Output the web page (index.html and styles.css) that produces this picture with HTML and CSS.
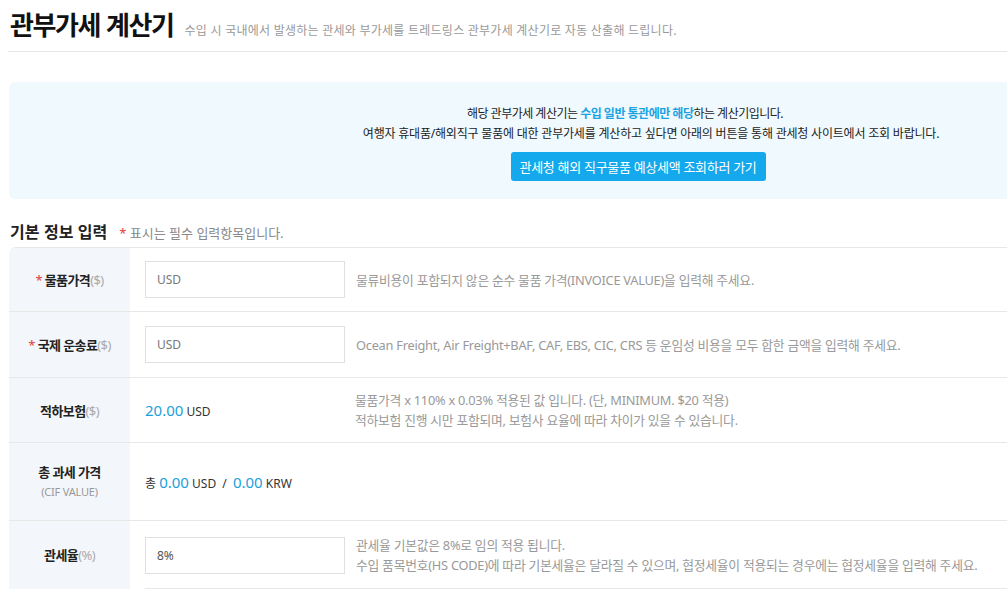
FILE: index.html
```html
<!DOCTYPE html>
<html lang="ko">
<head>
<meta charset="utf-8">
<title>관부가세 계산기</title>
<link rel="stylesheet" href="styles.css">
</head>
<body>
<div class="page">
  <header class="page-head">
    <h1 class="title">관부가세 계산기</h1>
    <p class="subtitle">수입 시 국내에서 발생하는 관세와 부가세를 트레드링스 관부가세 계산기로 자동 산출해 드립니다.</p>
  </header>

  <section class="notice">
    <p class="notice-line first">해당 관부가세 계산기는 <strong class="hl">수입 일반 통관에만 해당</strong>하는 계산기입니다.</p>
    <p class="notice-line second">여행자 휴대품/해외직구 물품에 대한 관부가세를 계산하고 싶다면 아래의 버튼을 통해 관세청 사이트에서 조회 바랍니다.</p>
    <button class="notice-btn" type="button">관세청 해외 직구물품 예상세액 조회하러 가기</button>
  </section>

  <div class="section-head">
    <h2 class="section-title">기본 정보 입력</h2>
    <span class="section-note"><span class="req">*</span> 표시는 필수 입력항목입니다.</span>
  </div>

  <div class="form-table">
    <div class="row r1">
      <div class="label"><span class="lbl"><span class="req">*</span> <b>물품가격</b><span class="unit">($)</span></span></div>
      <div class="cell">
        <input class="field" type="text" placeholder="USD">
        <p class="desc">물류비용이 포함되지 않은 순수 물품 가격(INVOICE VALUE)을 입력해 주세요.</p>
      </div>
    </div>
    <div class="row r2">
      <div class="label"><span class="lbl"><span class="req">*</span> <b>국제 운송료</b><span class="unit">($)</span></span></div>
      <div class="cell">
        <input class="field" type="text" placeholder="USD">
        <p class="desc">Ocean Freight, Air Freight+BAF, CAF, EBS, CIC, CRS 등 운임성 비용을 모두 합한 금액을 입력해 주세요.</p>
      </div>
    </div>
    <div class="row r3">
      <div class="label"><span class="lbl"><b>적하보험</b><span class="unit">($)</span></span></div>
      <div class="cell">
        <div class="value"><span class="num">20.00</span> USD</div>
        <p class="desc">물품가격 x 110% x 0.03% 적용된 값 입니다. (단, MINIMUM. $20 적용)<br>적하보험 진행 시만 포함되며, 보험사 요율에 따라 차이가 있을 수 있습니다.</p>
      </div>
    </div>
    <div class="row r4">
      <div class="label stack"><b>총 과세 가격</b><span class="sub">(CIF VALUE)</span></div>
      <div class="cell">
        <div class="value total">총 <span class="num">0.00</span> USD <span class="slash">/</span> <span class="num">0.00</span> KRW</div>
      </div>
    </div>
    <div class="row r5">
      <div class="label top"><span class="lbl"><b>관세율</b><span class="unit">(%)</span></span></div>
      <div class="cell col">
        <div class="sub-row">
          <input class="field" type="text" value="8%">
          <p class="desc">관세율 기본값은 8%로 임의 적용 됩니다.<br>수입 품목번호(HS CODE)에 따라 기본세율은 달라질 수 있으며, 협정세율이 적용되는 경우에는 협정세율을 입력해 주세요.</p>
        </div>
        <div class="sub-row next"></div>
      </div>
    </div>
  </div>
</div>
</body>
</html>
```

FILE: styles.css
```css
html, body {
  margin: 0;
  padding: 0;
  overflow: hidden;
  background: #fff;
}
body {
  font-family: "Noto Sans", "Noto Sans CJK KR", sans-serif;
  color: #333;
}
.page {
  width: 1258px;
  padding: 0 0 0 9px;
}
.page-head {
  display: flex;
  align-items: baseline;
  gap: 11px;
  height: 52px;
  box-sizing: border-box;
  padding-top: 5px;
  border-bottom: 1px solid #e6e6e6;
  margin-left: -1px;
  padding-left: 2px;
}
.title {
  margin: 0;
  font-family: "Noto Sans CJK KR", sans-serif;
  font-size: 26px;
  font-weight: 700;
  color: #111;
  line-height: 38px;
  letter-spacing: -1.4px;
}
.subtitle {
  margin: 0;
  font-size: 12px;
  color: #999;
  letter-spacing: 0.25px;
}
.notice {
  margin-top: 30px;
  background: #eff9fe;
  border-radius: 6px;
  height: 117px;
  box-sizing: border-box;
  padding-top: 22px;
  display: flex;
  flex-direction: column;
  align-items: center;
}
.notice-line {
  margin: 0;
  font-size: 12px;
  line-height: 20px;
  color: #222;
  letter-spacing: -0.2px;
}
.notice-line.first {
  margin-right: 26px;
  letter-spacing: -0.5px;
}
.notice-line.second {
  margin-left: 26px;
}
.hl {
  color: #1aa3e2;
  font-weight: 700;
}
.notice-btn {
  margin-top: 8px;
  width: 255px;
  height: 29px;
  border: 0;
  border-radius: 3px;
  background: #13a9ec;
  color: #fff;
  font-family: inherit;
  font-size: 13px;
  letter-spacing: -0.3px;
  padding: 0;
}
.section-head {
  display: flex;
  align-items: baseline;
  gap: 12px;
  margin-top: 20px;
  height: 28px;
  padding-left: 1px;
}
.section-title {
  margin: 0;
  font-family: "Noto Sans CJK KR", sans-serif;
  font-size: 16px;
  font-weight: 700;
  color: #222;
  letter-spacing: 0;
}
.section-note {
  font-size: 13px;
  color: #888;
  letter-spacing: 0;
}
.req {
  color: #e33b3b;
  font-weight: 400;
}
.form-table {
  border-top: 1px solid #e8e8e8;
  border-top-left-radius: 7px;
  overflow: hidden;
}
.row {
  display: flex;
  border-bottom: 1px solid #e8e8e8;
  box-sizing: border-box;
}
.r1 { height: 64px; }
.r2 { height: 66px; }
.r3 { height: 65px; }
.r4 { height: 78px; }
.r5 { height: 120px; }
.label {
  width: 121px;
  flex: none;
  background: #f3f6fa;
  display: flex;
  align-items: center;
  justify-content: center;
  font-size: 13px;
  color: #222;
}
.lbl {
  white-space: nowrap;
  letter-spacing: -0.6px;
}
.label b { font-weight: 700; }
.unit {
  color: #aaa;
  font-weight: 400;
}
.label.stack {
  flex-direction: column;
  line-height: 19px;
  letter-spacing: -0.6px;
}
.label.top {
  align-items: flex-start;
  padding-top: 24px;
}
.sub {
  font-size: 11px;
  color: #999;
  letter-spacing: -0.2px;
}
.cell {
  flex: 1;
  display: flex;
  align-items: center;
  padding-left: 15px;
  gap: 11px;
}
.cell.col {
  flex-direction: column;
  align-items: stretch;
  gap: 0;
  padding-top: 14px;
}
.sub-row {
  display: flex;
  align-items: center;
  gap: 11px;
}
.sub-row.next {
  margin-top: 13px;
  border-top: 1px solid #e8e8e8;
  height: 40px;
}
.field {
  width: 200px;
  height: 37px;
  box-sizing: border-box;
  border: 1px solid #e0e0e0;
  padding: 0 11px;
  font-family: inherit;
  font-size: 12px;
  color: #555;
  background: #fff;
  outline: none;
}
.field::placeholder { color: #777; }
.desc {
  margin: 0;
  font-size: 12.8px;
  line-height: 20px;
  color: #999;
  letter-spacing: -0.25px;
}
.value {
  width: 199px;
  font-size: 12px;
  color: #333;
}
.num {
  font-size: 15px;
  color: #1b9fdb;
}
.slash { padding: 0 3px; }
```
